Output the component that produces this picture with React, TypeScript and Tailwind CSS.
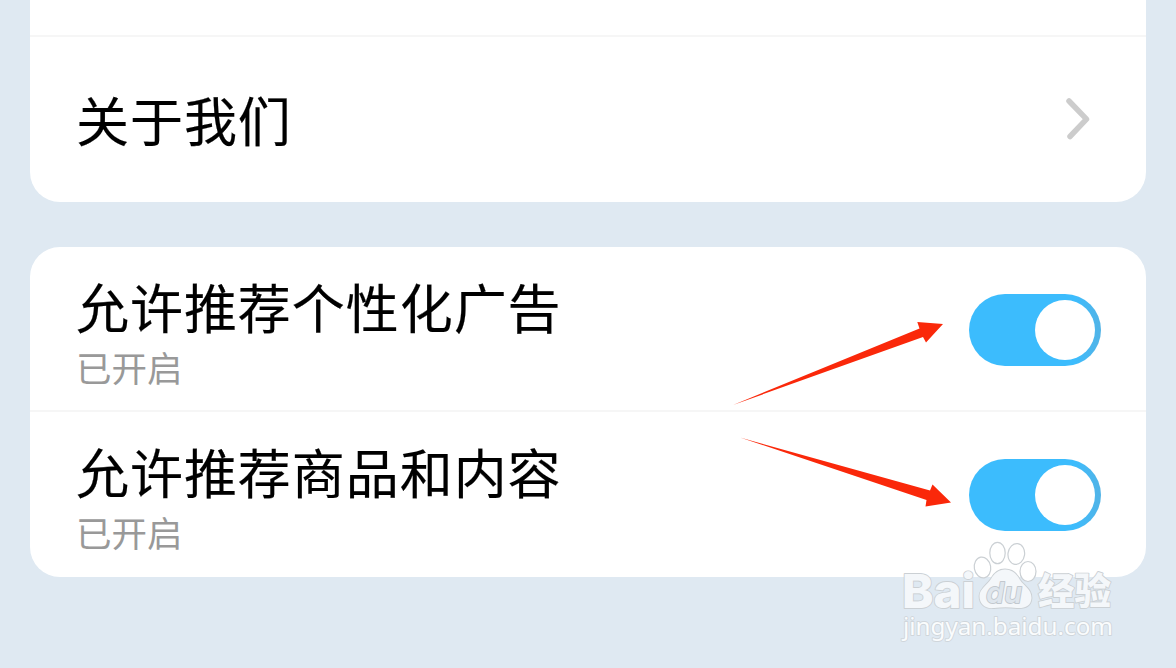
const SETTINGS = [
  { id: 'ads',     title: '允许推荐个性化广告', status: '已开启' },
  { id: 'content', title: '允许推荐商品和内容', status: '已开启' },
];

function Toggle() {
  return (
    <button
      type="button"
      role="switch"
      aria-checked="true"
      className="flex h-[72px] w-[132px] items-center justify-end rounded-full bg-[#3cbcfd] bg-linear-to-r from-[#3cbcfd] from-80% to-[#51b3e6] pr-1.5"
    >
      <span className="h-[60px] w-[60px] rounded-full bg-white" />
    </button>
  );
}

function Arrows() {
  return (
    <svg className="pointer-events-none absolute left-0 top-0" width="1176" height="668" viewBox="0 0 1176 668" fill="#fa280a">
      <path d="M733 405 L919.5 328.5 L917.3 322 L943 324 L926 342.5 L923 337 Z" />
      <path d="M740 437.5 L930 490.5 L932.5 484.5 L951 502.5 L925.5 506.5 L926.5 500 Z" />
    </svg>
  );
}

function Watermark() {
  return (
    <svg
      className="pointer-events-none absolute left-[896px] top-[536px]"
      width="228"
      height="112"
      viewBox="896 536 228 112"
      fill="#f4f7fa"
      stroke="#cbd0d4"
      strokeWidth="1.8"
      strokeLinejoin="round"
      paintOrder="stroke"
    >
      {/* Paw */}
      <g fill="#fff" strokeWidth="1.2" paintOrder="normal">
        <ellipse cx="997.5" cy="553" rx="7.7" ry="10.7" />
        <ellipse cx="1016.3" cy="554" rx="8.3" ry="10.5" transform="rotate(8 1016.3 554)" />
        <ellipse cx="982.5" cy="567.5" rx="8.2" ry="10.5" transform="rotate(-10 982.5 567.5)" />
        <ellipse cx="1028" cy="571.5" rx="8" ry="10" />
      </g>
      <path d="M1005 569.5 C1012 569.5 1017 574 1020 580 C1024 586 1031.5 589 1031.5 598 C1031 606 1025 608.5 1017 608 C1009 607 1002 607 994 608 C985 609 979.5 604 979.5 596 C979.5 589 987 585 991 579 C994 573.5 999 569.5 1005 569.5 Z" />

      <text x="902" y="607.5" fontSize="47" fontWeight="800" textLength="73" lengthAdjust="spacingAndGlyphs" className="font-['Inter',sans-serif]">Bai</text>
      <text x="986" y="602.5" fontSize="29" fontWeight="600" fontStyle="italic" textLength="36" lengthAdjust="spacingAndGlyphs" fill="#dfe6ed" stroke="#c2c8ce" className="font-['Inter',sans-serif]">du</text>
      <text x="1038" y="604.5" fontSize="37" fontWeight="900" textLength="73" lengthAdjust="spacingAndGlyphs" className="font-['Noto_Sans_CJK_SC',sans-serif]">经验</text>
      <text x="903" y="635" fontSize="24" textLength="210" lengthAdjust="spacingAndGlyphs" fill="#fafcfd" stroke="#d0d6db" className="font-['Noto_Sans',sans-serif]">jingyan.baidu.com</text>
    </svg>
  );
}

export default function App() {
  return (
    <div className="relative h-[668px] w-[1176px] overflow-hidden bg-[#dfe9f2] px-[30px] font-['Noto_Sans_CJK_SC',sans-serif] text-black">
      <section className="h-[202px] rounded-b-[30px] bg-white">
        <div className="h-[37px] border-b-2 border-[#f6f6f6]" />
        <div className="flex h-[165px] items-center justify-between pl-[46px] pr-[54px]">
          <h2 className="mb-0.5 text-[53px] leading-[72px] tracking-[0.95px] [-webkit-text-stroke:0.2px_#000]">关于我们</h2>
          <svg width="28" height="44" viewBox="0 0 28 44" fill="none" stroke="#ccc" strokeWidth="5.5" strokeLinecap="round" strokeLinejoin="round">
            <path d="M5 3 L22.5 21.2 L6 38.5" />
          </svg>
        </div>
      </section>

      <section className="mt-[45px] h-[330px] rounded-[30px] bg-white">
        {SETTINGS.map(item => (
          <div key={item.id} className="flex h-[165px] items-start justify-between pl-[46px] pr-[45px] shadow-[0_-2px_0_#f6f6f6] first:shadow-none">
            <div className="pt-[21px]">
              <h2 className="text-[53px] leading-[76px] tracking-[0.95px] [-webkit-text-stroke:0.2px_#000]">{item.title}</h2>
              <p className="text-[35.5px] leading-[46px] text-[#999]">{item.status}</p>
            </div>
            <div className="pt-[47px]">
              <Toggle />
            </div>
          </div>
        ))}
      </section>

      <Arrows />
      <Watermark />
    </div>
  );
}
